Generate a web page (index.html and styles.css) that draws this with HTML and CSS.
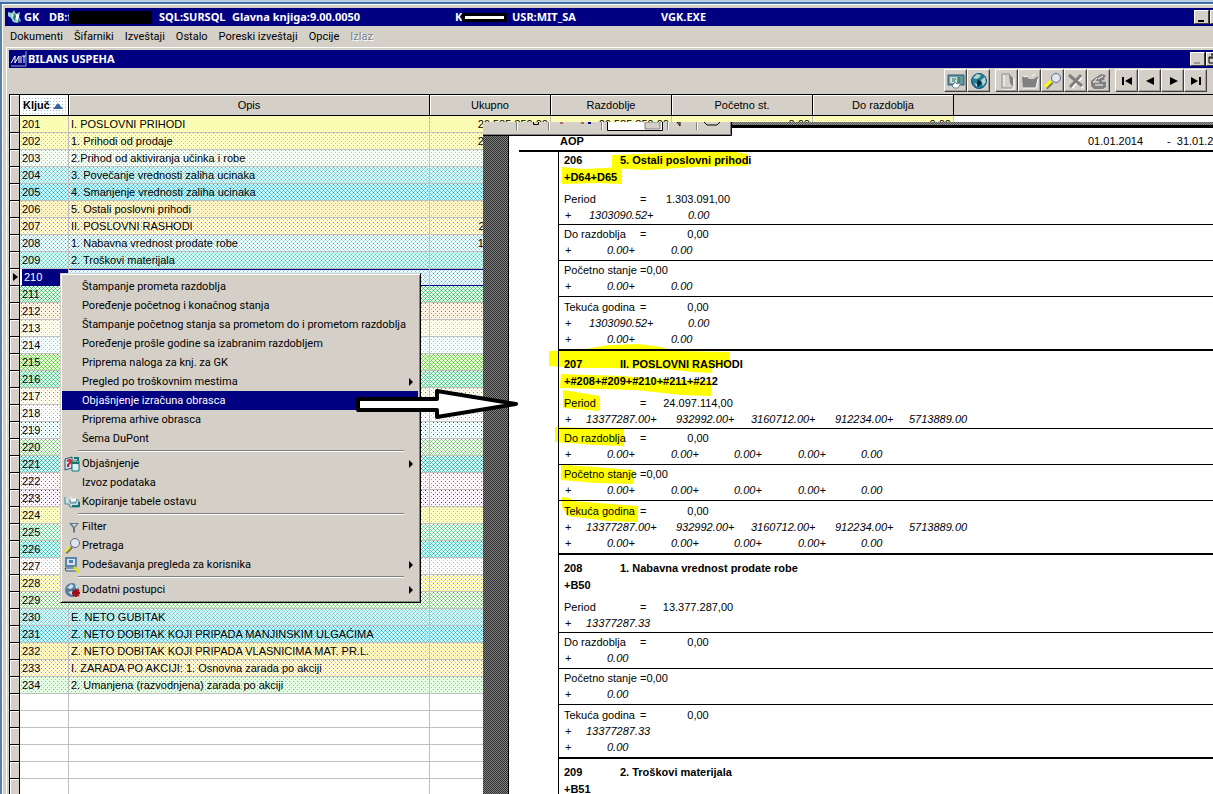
FILE: index.html
```html
<!DOCTYPE html>
<html lang="sr-Latn">
<head>
<meta charset="utf-8">
<title>GK - Bilans uspeha</title>
<link rel="stylesheet" href="styles.css">
</head>
<body>
<main class="desktop">
<div class="window">
<header class="titlebar">
  <svg class="app-icon" width="16" height="16" viewBox="0 0 16 16"><path d="M1 3l4 1 2-3 2 4 4-2-1 5 2 4-4 2-4-1-2-4-3-2z" fill="#9cc"/><path d="M5 4l3 4-2 2zM9 5l3 1-1 6-3-3z" fill="#fff"/><path d="M7 4l2 3-1 5-2-3zM11 9l2 3-2 1z" fill="#277"/></svg>
  <div class="title-fields">
    <span>GK</span><span>DB:f</span><span class="redacted"></span><span>SQL:SURSQL</span><span>Glavna knjiga:9.00.0050</span><span class="masked">K<i></i></span><span>USR:MIT_SA</span><span>VGK.EXE</span>
  </div>
  <div class="caption-buttons outer"><button aria-label="Minimize"><i></i></button><button aria-label="Maximize"></button></div>
</header>
<nav class="menubar">
  <button>Dokumenti</button><button>Šifarniki</button><button>Izveštaji</button><button>Ostalo</button><button>Poreski izveštaji</button><button>Opcije</button><button disabled>Izlaz</button>
</nav>
<section class="child">
<header class="titlebar">
  <svg class="mit-icon" width="18" height="18" viewBox="0 0 18 18"><path d="M2 13l4-7v7l4-7v7M12 6v7M13 6h4M15 6v7" fill="none" stroke="#fff"/><path d="M17 1v15H2" fill="none" stroke="#9ab"/></svg>
  <h1>BILANS USPEHA</h1>
  <div class="caption-buttons inner"><button aria-label="Minimize" disabled><i></i></button><button aria-label="Restore"><svg width="12" height="12" viewBox="0 0 12 12"><path d="M4 1h6v5H8M2 4h6v6H2zM4 2h6M2 5h6" fill="none" stroke="#000"/></svg></button></div>
</header>
<div class="toolbar">
  <div class="group">
    <button aria-label="Monitor"><svg viewBox="0 0 18 18"><path d="M1 3h16v10H1z" fill="#699" stroke="#357"/><path d="M3 5h7v6H3z" fill="#cdd"/><path d="M5 7h4M5 9h3M12 5v6" stroke="#275"/><path d="M5 14l3-4 2 2 4-1-3 5H7z" fill="#fff" stroke="#68a"/></svg></button>
    <button aria-label="Web"><svg viewBox="0 0 18 18"><circle cx="9" cy="9" r="7.500" fill="#267d98" stroke="#134c78"/><path d="M3 6l4-4 4 1-2 3-3 1zM11 8l4-3 1 5-3 4zM4 11l3 1v3z" fill="#add8c8"/><path d="M8 7l4 4-4 4-1-4z" fill="#024"/></svg></button>
  </div>
  <div class="group">
    <button aria-label="Novi" disabled><svg viewBox="0 0 18 18"><path d="M4 2h8l3 3v12H4z" fill="#d4d0c8"/><path d="M5 17h11V6M6 3v11" fill="none" stroke="#fff"/><path d="M4 2h8M4 2v14h10" fill="none" stroke="#909090"/><path d="M11 2l4 4v9l-3-4z" fill="#808080"/></svg></button>
    <button aria-label="Otvori" disabled><svg viewBox="0 0 18 18"><path d="M1 5h5l2 2h5l4-3-2 12H2z" fill="#808080"/><path d="M2 16h13l2-9M3 5l3-1M11 4l3-2" fill="none" stroke="#fff"/></svg></button>
    <button aria-label="Traži"><svg viewBox="0 0 18 18"><path d="M2 16l6-6" stroke="#777" stroke-width="4"/><path d="M1 15l6-6" stroke="#ff0" stroke-width="3"/><circle cx="12" cy="6" r="4.500" fill="#dde6ee" stroke="#668"/></svg></button>
    <button aria-label="Obriši" disabled><svg viewBox="0 0 18 18"><path d="M4 4l12 12M15 5L5 16" stroke="#fff" stroke-width="2"/><path d="M2 3l13 11M14 3L3 15" stroke="#808080" stroke-width="3"/></svg></button>
    <button aria-label="Štampaj" disabled><svg viewBox="0 0 18 18"><path d="M1 9l4-3 6-4 5 1-2 4 2 2v6l-3 2H4l-3-3z" fill="#808080"/><path d="M8 7l5-3M3 10h6M5 13h8M7 6l-3 4M12 9h4" stroke="#fff"/></svg></button>
  </div>
  <div class="group">
    <button aria-label="Prvi"><svg viewBox="0 0 18 18"><path d="M4 5h2v8H4zM14 5v8L7 9z"/></svg></button>
    <button aria-label="Prethodni"><svg viewBox="0 0 18 18"><path d="M13 5v8L5 9z"/></svg></button>
    <button aria-label="Sledeći"><svg viewBox="0 0 18 18"><path d="M6 5v8l8-4z"/></svg></button>
    <button aria-label="Poslednji"><svg viewBox="0 0 18 18"><path d="M4 5v8l7-4zM12 5h2v8h-2z"/></svg></button>
  </div>
</div>
<table class="grid">
<colgroup><col class="c-sel"><col class="c-key"><col class="c-name"><col class="c-amt"><col class="c-amt"><col class="c-wide"><col class="c-wide"><col></colgroup>
<thead><tr><th></th><th class="sorted">Ključ <svg width="10" height="6" viewBox="0 0 10 6"><path d="M0 6l5-6 5 6z" fill="#3a64a0"/></svg></th><th>Opis</th><th>Ukupno</th><th>Razdoblje</th><th>Početno st.</th><th>Do razdoblja</th><th class="rest"></th></tr></thead>
<tbody>
<tr class="lemon"><th></th><td>201</td><td>I. POSLOVNI PRIHODI</td><td>26.585.859,00</td><td>26.585.859,00</td><td>0,00</td><td>0,00</td><td></td></tr>
<tr class="lime"><th></th><td>202</td><td>1. Prihodi od prodaje</td><td>25.282.768,00</td><td></td><td></td><td></td><td></td></tr>
<tr class="mint"><th></th><td>203</td><td>2.Prihod od aktiviranja učinka i robe</td><td></td><td></td><td></td><td></td><td></td></tr>
<tr class="aqua"><th></th><td>204</td><td>3. Povečanje vrednosti zaliha ucinaka</td><td></td><td></td><td></td><td></td><td></td></tr>
<tr class="cyan"><th></th><td>205</td><td>4. Smanjenje vrednosti zaliha ucinaka</td><td></td><td></td><td></td><td></td><td></td></tr>
<tr class="peach"><th></th><td>206</td><td>5. Ostali poslovni prihodi</td><td></td><td></td><td></td><td></td><td></td></tr>
<tr class="sand"><th></th><td>207</td><td>II. POSLOVNI RASHODI</td><td>24.097.114,00</td><td></td><td></td><td></td><td></td></tr>
<tr class="mist"><th></th><td>208</td><td>1. Nabavna vrednost prodate robe</td><td>13.377.287,00</td><td></td><td></td><td></td><td></td></tr>
<tr class="teal"><th></th><td>209</td><td>2. Troškovi materijala</td><td></td><td></td><td></td><td></td><td></td></tr>
<tr class="mist current"><th><svg width="5" height="8" viewBox="0 0 5 8"><path d="M0 0v8l5-4z"/></svg></th><td>210</td><td>3. Troškovi zarada, naknada i ostali lični</td><td></td><td></td><td></td><td></td><td></td></tr>
<tr class="green"><th></th><td>211</td><td></td><td></td><td></td><td></td><td></td><td></td></tr>
<tr class="rose"><th></th><td>212</td><td></td><td></td><td></td><td></td><td></td><td></td></tr>
<tr class="pale"><th></th><td>213</td><td></td><td></td><td></td><td></td><td></td><td></td></tr>
<tr class="ice"><th></th><td>214</td><td></td><td></td><td></td><td></td><td></td><td></td></tr>
<tr class="grass"><th></th><td>215</td><td></td><td></td><td></td><td></td><td></td><td></td></tr>
<tr class="jade"><th></th><td>216</td><td></td><td></td><td></td><td></td><td></td><td></td></tr>
<tr class="cream"><th></th><td>217</td><td></td><td></td><td></td><td></td><td></td><td></td></tr>
<tr class="snow"><th></th><td>218</td><td></td><td></td><td></td><td></td><td></td><td></td></tr>
<tr class="sky"><th></th><td>219</td><td></td><td></td><td></td><td></td><td></td><td></td></tr>
<tr class="leaf"><th></th><td>220</td><td></td><td></td><td></td><td></td><td></td><td></td></tr>
<tr class="sea"><th></th><td>221</td><td></td><td></td><td></td><td></td><td></td><td></td></tr>
<tr class="pink"><th></th><td>222</td><td></td><td></td><td></td><td></td><td></td><td></td></tr>
<tr class="violet"><th></th><td>223</td><td></td><td></td><td></td><td></td><td></td><td></td></tr>
<tr class="lime"><th></th><td>224</td><td></td><td></td><td></td><td></td><td></td><td></td></tr>
<tr class="spring"><th></th><td>225</td><td></td><td></td><td></td><td></td><td></td><td></td></tr>
<tr class="turq"><th></th><td>226</td><td></td><td></td><td></td><td></td><td></td><td></td></tr>
<tr class="snow"><th></th><td>227</td><td></td><td></td><td></td><td></td><td></td><td></td></tr>
<tr class="gold"><th></th><td>228</td><td></td><td></td><td></td><td></td><td></td><td></td></tr>
<tr class="leaf"><th></th><td>229</td><td></td><td></td><td></td><td></td><td></td><td></td></tr>
<tr class="aqua"><th></th><td>230</td><td>E. NETO GUBITAK</td><td></td><td></td><td></td><td></td><td></td></tr>
<tr class="cyan"><th></th><td>231</td><td>Z. NETO DOBITAK KOJI PRIPADA MANJINSKIM ULGAĆIMA</td><td></td><td></td><td></td><td></td><td></td></tr>
<tr class="amber"><th></th><td>232</td><td>Z. NETO DOBITAK KOJI PRIPADA VLASNICIMA MAT. PR.L.</td><td></td><td></td><td></td><td></td><td></td></tr>
<tr class="sand"><th></th><td>233</td><td>I. ZARADA PO AKCIJI: 1. Osnovna zarada po akciji</td><td></td><td></td><td></td><td></td><td></td></tr>
<tr class="meadow"><th></th><td>234</td><td>2. Umanjena (razvodnjena) zarada po akciji</td><td></td><td></td><td></td><td></td><td></td></tr>
<tr><th></th><td></td><td></td><td></td><td></td><td></td><td></td><td></td></tr>
<tr><th></th><td></td><td></td><td></td><td></td><td></td><td></td><td></td></tr>
<tr><th></th><td></td><td></td><td></td><td></td><td></td><td></td><td></td></tr>
<tr><th></th><td></td><td></td><td></td><td></td><td></td><td></td><td></td></tr>
<tr><th></th><td></td><td></td><td></td><td></td><td></td><td></td><td></td></tr>
<tr><th></th><td></td><td></td><td></td><td></td><td></td><td></td><td></td></tr>
</tbody>
</table>
</section>
</div>

<aside class="preview">
  <svg class="preview-tools" width="249" height="14" viewBox="0 0 249 14">
    <path d="M0 0h249v14H0z" fill="#d4d0c8"/><path d="M0 13.500h248.500V0" fill="none" stroke="#000"/><path d="M0 12.500h247.500V0" fill="none" stroke="#808080"/>
    <path d="M33.500 0v8M65.500 0v8M118.500 0v8M184.500 0v8M213.500 0v8" stroke="#808080"/><path d="M34.500 0v8M66.500 0v8M119.500 0v8M185.500 0v8M214.500 0v8" stroke="#fff"/>
    <path d="M50.500 0v2.500h5V0" fill="none" stroke="#000"/><path d="M77 1h3M98 1h3" stroke="#800"/><path d="M105 1h3" stroke="#008" stroke-width="2"/>
    <path d="M124.500 0v8.500h55V0" fill="#fff" stroke="#000"/><path d="M162 0h15v7h-15z" fill="#d4d0c8" stroke="#808080"/>
    <path d="M194 0l3 4V0zM221 0l3 3h10l3-3" fill="none" stroke="#000"/>
  </svg>
  <div class="sheet">
    <div class="gutter"></div>
    <article class="page">
      <svg class="marker" aria-hidden="true"><g transform="translate(-509 -128)" fill="#ff0">
        <path d="M612 155l50-2 66-2 20 3v12l-52 1-50 3-34-2z"/>
        <path d="M562 167l22 2 38-2v17l-25-1-35 1z"/>
        <path d="M549 351l30-1 30-5 30-1 22 3 12 4 56 1v15l-16 0-2 6-18-1-28-3-56-1h-28l-32-2z"/>
        <path d="M561 374l60 2 40 3 50 2v15l-30-1-45-5-36-1-40-1z"/>
        <path d="M563 390l37 6v15l-37-3z"/>
        <path d="M555 427l32 1 37 1v17l-28-1-41-3z"/>
        <path d="M561 465l20 1 53 4v14l-37-1-36-3z"/>
        <path d="M562 497l8 1 2 3 66 5v16l-30-1-40-5-6-9z"/>
      </g></svg>
      <header class="page-head"><b>AOP</b><span>01.01.2014</span><span>- &nbsp;31.01.2014</span></header>
      <div class="entries">
        <section class="entry">
          <h2><span>206</span>5. Ostali poslovni prihodi</h2><h3>+D64+D65</h3>
          <div class="part"><p class="sum"><span>Period</span><span>=</span><span>1.303.091,00</span></p><p class="calc two"><b>+</b><i>1303090.52+</i><i>0.00</i></p></div>
          <div class="part"><p class="sum"><span>Do razdoblja</span><span>=</span><span>0,00</span></p><p class="calc"><b>+</b><i>0.00+</i><i>0.00</i></p></div>
          <div class="part"><p class="sum near"><span>Početno stanje</span><span>=0,00</span></p><p class="calc"><b>+</b><i>0.00+</i><i>0.00</i></p></div>
          <div class="part"><p class="sum"><span>Tekuća godina</span><span>=</span><span>0,00</span></p><p class="calc two"><b>+</b><i>1303090.52+</i><i>0.00</i></p><p class="calc"><b>+</b><i>0.00+</i><i>0.00</i></p></div>
        </section>
        <section class="entry">
          <h2><span>207</span>II. POSLOVNI RASHODI</h2><h3>+#208+#209+#210+#211+#212</h3>
          <div class="part"><p class="sum"><span>Period</span><span>=</span><span>24.097.114,00</span></p><p class="calc many"><b>+</b><i>13377287.00+</i><i>932992.00+</i><i>3160712.00+</i><i>912234.00+</i><i>5713889.00</i></p></div>
          <div class="part"><p class="sum"><span>Do razdoblja</span><span>=</span><span>0,00</span></p><p class="calc"><b>+</b><i>0.00+</i><i>0.00+</i><i>0.00+</i><i>0.00+</i><i>0.00</i></p></div>
          <div class="part"><p class="sum near"><span>Početno stanje</span><span>=0,00</span></p><p class="calc"><b>+</b><i>0.00+</i><i>0.00+</i><i>0.00+</i><i>0.00+</i><i>0.00</i></p></div>
          <div class="part"><p class="sum"><span>Tekuća godina</span><span>=</span><span>0,00</span></p><p class="calc many"><b>+</b><i>13377287.00+</i><i>932992.00+</i><i>3160712.00+</i><i>912234.00+</i><i>5713889.00</i></p><p class="calc"><b>+</b><i>0.00+</i><i>0.00+</i><i>0.00+</i><i>0.00+</i><i>0.00</i></p></div>
        </section>
        <section class="entry">
          <h2><span>208</span>1. Nabavna vrednost prodate robe</h2><h3>+B50</h3>
          <div class="part"><p class="sum"><span>Period</span><span>=</span><span>13.377.287,00</span></p><p class="calc many"><b>+</b><i>13377287.33</i></p></div>
          <div class="part"><p class="sum"><span>Do razdoblja</span><span>=</span><span>0,00</span></p><p class="calc"><b>+</b><i>0.00</i></p></div>
          <div class="part"><p class="sum near"><span>Početno stanje</span><span>=0,00</span></p><p class="calc"><b>+</b><i>0.00</i></p></div>
          <div class="part"><p class="sum"><span>Tekuća godina</span><span>=</span><span>0,00</span></p><p class="calc many"><b>+</b><i>13377287.33</i></p><p class="calc"><b>+</b><i>0.00</i></p></div>
        </section>
        <section class="entry"><h2><span>209</span>2. Troškovi materijala</h2><h3>+B51</h3></section>
      </div>
    </article>
  </div>
</aside>

<div class="context" role="menu">
  <button role="menuitem">Štampanje prometa razdoblja</button>
  <button role="menuitem">Poređenje početnog i konačnog stanja</button>
  <button role="menuitem">Štampanje početnog stanja sa prometom do i prometom razdoblja</button>
  <button role="menuitem">Poređenje prošle godine sa izabranim razdobljem</button>
  <button role="menuitem">Priprema naloga za knj. za GK</button>
  <button role="menuitem" class="sub">Pregled po troškovnim mestima</button>
  <button role="menuitem" class="active">Objašnjenje izračuna obrasca</button>
  <button role="menuitem">Priprema arhive obrasca</button>
  <button role="menuitem">Šema DuPont</button>
  <hr>
  <button role="menuitem" class="sub"><svg viewBox="0 0 16 16"><path d="M1 3l7-2v11l-7 2z" fill="#cde" stroke="#357"/><path d="M8 5h7v10H8z" fill="#dee" stroke="#177"/><path d="M10 2h4v3M8 7h7" fill="none" stroke="#177" stroke-width="2"/><path d="M3 5l3-1 1 2-3 3v2" fill="none" stroke="#c22" stroke-width="2"/></svg>Objašnjenje</button>
  <button role="menuitem">Izvoz podataka</button>
  <button role="menuitem"><svg viewBox="0 0 16 16"><path d="M1 3v7h4l1 3h9V7l-3-2v4H6V5" fill="#cde" stroke="#4a8a90"/><path d="M6 2l2 3 4-1v3H7z" fill="#fff"/><path d="M8 12h7V8" fill="none" stroke="#177" stroke-width="2"/></svg>Kopiranje tabele ostavu</button>
  <hr>
  <button role="menuitem"><svg viewBox="0 0 16 16"><path d="M5 4h10l-4 5v5l-2-1V9z" fill="#678"/><path d="M8 5h5l-3 3z" fill="#cdd"/></svg>Filter</button>
  <button role="menuitem"><svg viewBox="0 0 16 16"><path d="M2 15l6-6" stroke="#776" stroke-width="3"/><path d="M1 14l5-5" stroke="#ee2" stroke-width="2"/><circle cx="11" cy="5" r="4.500" fill="#dde6ee" stroke="#668"/></svg>Pretraga</button>
  <button role="menuitem" class="sub"><svg viewBox="0 0 16 16"><path d="M2 1h10v8H2z" fill="#dde" stroke="#58a" stroke-width="2"/><path d="M5 3h4v3H5z" fill="#48a"/><path d="M1 11h10l2 3H2z" fill="#cdd" stroke="#357"/><path d="M10 10l5 5" stroke="#dd2" stroke-width="3"/></svg>Podešavanja pregleda za korisnika</button>
  <hr>
  <button role="menuitem" class="sub"><svg viewBox="0 0 16 16"><circle cx="8" cy="8" r="7" fill="#567c99"/><path d="M3 6l4-4 3 2-3 3zM4 10l4-1v4zM11 1l4 4-3 2z" fill="#cde"/><path d="M12 7v8M8 11h8M9 8l6 6M15 8l-6 6" stroke="#a01018" stroke-width="2"/></svg>Dodatni postupci</button>
</div>
<svg class="pointer" width="168" height="34" viewBox="0 0 168 34"><path d="M5 12h79V4l79 13-79 13v-7H5z" fill="#fff" stroke="#000" stroke-width="4" stroke-linejoin="round"/></svg>
</main>
</body>
</html>
```
FILE: styles.css
```css
:root {
  --face: #d4d0c8;
  --navy: #000080;
  --ui: Roboto, "Liberation Sans", sans-serif;
  --doc: "Liberation Sans", Arial, sans-serif;
}
* { box-sizing: border-box; }
body { margin: 0; font: 11px/16px var(--doc); color: #000; }
button { font: inherit; color: inherit; margin: 0; padding: 0; border: 0; background: none; }
h1, h2, h3, p { margin: 0; font-size: 11px; }
svg { display: block; flex: none; }

.desktop {
  position: relative;
  height: 100vh;
  overflow: hidden;
  padding: 4px 0 0 2px;
  background: linear-gradient(#b9cfe6 2px, #3f6ea5 2px 4px, #5b7fa6 4px);
}
.window {
  height: 100%;
  border-top: 1px solid #fff;
  border-left: 1px solid #fff;
  padding: 3px 0 0 2px;
  background: var(--face);
  overflow: hidden;
}
.titlebar {
  display: flex;
  align-items: center;
  height: 18px;
  background: var(--navy);
  color: #fff;
  font: bold 11px/18px "Noto Sans", sans-serif;
}
.app-icon { margin: 0 1px 0 2px; }
.title-fields {
  display: grid;
  grid-template-columns: 25px 20px 90px 73px 223px 57px 149px auto;
  white-space: pre;
}
.redacted { height: 13px; margin: 3px 7px 0 0; background: #000; z-index: 1; }
.masked { display: flex; align-items: center; }
.masked i { width: 45px; height: 9px; border: 3px solid #000; background: #fff; }
.caption-buttons { display: flex; gap: 1px; margin-left: auto; overflow: hidden; }
.caption-buttons.outer { width: 19px; }
.caption-buttons.inner { width: 23px; }
.caption-buttons button {
  flex: none;
  width: 15px;
  height: 14px;
  background: var(--face);
  border: 1px solid;
  border-color: #fff #404040 #404040 #fff;
}
.caption-buttons i { display: block; width: 6px; height: 2px; margin: 7px 0 0 3px; background: #000; }
.caption-buttons :disabled i { background: #999; }

.menubar {
  display: flex;
  gap: 11px;
  height: 21px;
  padding-left: 5px;
  font: 11px/20px var(--ui);
}
.menubar :disabled { color: #808080; text-shadow: 1px 1px #fff; }

.child {
  margin-left: 1px;
  border-top: 1px solid #fff;
  border-left: 1px solid #fff;
  padding: 2px 0 0 2px;
}
.child h1 { font-size: 11px; margin-left: 1px; }
.toolbar { display: flex; justify-content: flex-end; gap: 5px; height: 26px; padding: 1px 6px 0 0; }
.group { display: flex; }
.group button {
  width: 23px;
  height: 23px;
  padding: 2px;
  border: 1px solid;
  border-color: #fff #404040 #404040 #fff;
  box-shadow: inset -1px -1px #a0a0a0;
}
.group svg { width: 18px; height: 18px; }

.grid {
  width: 100%;
  table-layout: fixed;
  border-spacing: 0;
  background: #fff;
}
.c-sel { width: 11px; }
.c-key { width: 49px; }
.c-name { width: 361px; }
.c-amt { width: 121px; }
.c-wide { width: 141px; }
.grid thead th {
  height: 22px;
  padding: 0;
  font-weight: normal;
  background: var(--face);
  border: solid #000;
  border-width: 1px 1px 1px 0;
  box-shadow: inset 1px 1px #fff;
}
.grid thead .sorted {
  font-weight: bold;
  text-align: left;
  padding-left: 3px;
  background: conic-gradient(at 1px 1px, transparent 75%, #9cc4dc 0) 0 0 / 3px 3px #fff;
}
.sorted svg { display: inline-block; }
.grid thead .rest { border-right: 0; box-shadow: none; }
.grid tr > :first-child { border-left: 1px solid #000; }
.grid tbody th {
  padding: 0;
  background: var(--face);
  border-right: 1px solid #000;
  border-bottom: 1px solid #000;
  box-shadow: inset 1px 1px #fff;
}
.grid tbody th svg { margin-left: 3px; }
.grid td {
  height: 17px;
  padding: 0 2px;
  line-height: 16px;
  white-space: nowrap;
  overflow: hidden;
  border-right: 1px solid #c0c0c0;
  border-bottom: 1px solid #c0c0c0;
}
.grid td:nth-child(n+4) { text-align: right; }
.grid td:last-child { border-right: 0; background: #fff; }
.grid tbody tr[class] {
  background:
    conic-gradient(at 1px 1px, transparent 75%, var(--a) 0) 0 0 / 4px 4px,
    conic-gradient(at 1px 1px, transparent 75%, var(--b) 0) 2px 2px / 4px 4px,
    conic-gradient(at 1px 1px, transparent 75%, var(--c, transparent) 0) 1px 1px / 2px 2px,
    var(--base);
}
.lemon { --a: #ecea98; --b: #ecea98; --base: #ffffb8; }
.lime { --a: #70d870; --b: #f0b080; --base: #ffffc4; }
.mint { --a: #58d480; --b: #88e098; --base: #f6fff4; }
.aqua { --a: #50b0b8; --b: #68c8d0; --c: #98dce0; --base: #dcfafa; }
.cyan { --a: #3898b8; --b: #40b8cc; --c: #78d4e4; --base: #c8f8fa; }
.peach { --a: #e08870; --b: #f0b860; --base: #fff4c4; }
.sand { --a: #a88068; --b: #d0b880; --c: #fff0b0; --base: #fffff4; }
.mist { --a: #7090c0; --b: #68c8c0; --c: #c0e4ec; --base: #f4ffff; }
.teal { --a: #40b8c0; --b: #50c8a8; --c: #98e4d8; --base: #d8faf8; }
.green { --a: #309858; --b: #48b868; --c: #78d094; --base: #e8fff0; }
.rose { --a: #d05060; --b: #f09850; --base: #fff4e4; }
.pale { --a: #60d888; --b: #f4d070; --base: #ffffee; }
.ice { --a: #40d0e8; --b: #70e0e0; --base: #f4ffff; }
.grass { --a: #48b838; --b: #58c858; --c: #90dc78; --base: #ecfcd8; }
.jade { --a: #30a878; --b: #38b8a0; --c: #78d4a4; --base: #dcfaec; }
.cream { --a: #e06848; --b: #f0c060; --base: #fffdee; }
.snow { --a: #c89098; --b: #a8ccc8; --base: #fff; }
.sky { --a: #3040a0; --b: #50d0ec; --base: #f0ffff; }
.leaf { --a: #509850; --b: #60c060; --c: #a4d8a0; --base: #fafffa; }
.sea { --a: #208880; --b: #30a0a0; --c: #68c4bc; --base: #d8faf8; }
.pink { --a: #d04090; --b: #f08090; --base: #fff6fa; }
.violet { --a: #3828a0; --b: #c060d8; --base: #fdf6ff; }
.spring { --a: #38b068; --b: #50cc88; --c: #90e0b0; --base: #f4fffa; }
.turq { --a: #28a8a0; --b: #30b8c0; --c: #70d8d0; --base: #d4faf8; }
.gold { --a: #b89828; --b: #e0cc38; --c: #f8f098; --base: #fffff0; }
.amber { --a: #c89058; --b: #e4b860; --c: #fff0a8; --base: #fffad0; }
.meadow { --a: #50c870; --b: #78d890; --base: #e4ffe4; }
.current td { border-bottom-color: var(--navy); box-shadow: inset 0 1px var(--navy); }
.current td:nth-child(2) { background: var(--navy); color: #fff; border-left: 2px solid #fff; }

.preview { position: absolute; top: 122px; left: 483px; right: 0; bottom: 0; overflow: hidden; background: #000; }
.preview::before {
  content: "";
  display: block;
  height: 3px;
  background: conic-gradient(#555 25%, #999 0 50%, #555 0 75%, #999 0) 0 0 / 2px 2px;
}
.preview-tools { position: absolute; top: 0; left: 0; z-index: 2; }
.sheet { display: flex; height: 100%; padding-top: 3px; }
.gutter {
  flex: none;
  width: 26px;
  border-right: 1px solid #000;
  background: conic-gradient(#303030 25%, #808080 0 50%, #303030 0 75%, #808080 0) 0 0 / 2px 2px;
}
.page { position: relative; z-index: 0; flex: 1; padding-left: 10px; background: #fff; }
.marker { position: absolute; z-index: -1; top: 0; left: 0; width: 100%; height: 100%; }
.page-head {
  display: grid;
  grid-template-columns: 528px 79px auto;
  height: 24px;
  padding: 5px 0 0 41px;
  white-space: nowrap;
  border-bottom: 2px solid #000;
}
.entries { margin-left: 39px; border-left: 1px solid #000; }
.entry { padding-top: 5px; border-top: 2px solid #000; line-height: 16px; }
.entry:first-child { padding-top: 0; border-top: 0; }
.entry h2, .entry h3 { padding-left: 5px; line-height: 17px; }
.entry h2 span { display: inline-block; width: 56px; }
.part { padding: 1px 0 2px; border-bottom: 1px solid #000; }
h3 + .part { padding: 5px 0 1px; }
.part:last-child { padding-top: 2px; border-bottom: 0; }
.sum { display: grid; grid-template-columns: 76px 14px 88px; padding-left: 5px; white-space: nowrap; }
.sum span:nth-child(3) { text-align: center; }
.calc { display: grid; grid-template-columns: 42px 64px 63px 64px 63px auto; padding-left: 6px; }
.calc.two { grid-template-columns: 24px 99px auto; }
.calc.many { grid-template-columns: 21px 90px 75px 84px 74px auto; }
.calc b { font-weight: normal; }

.context {
  position: absolute;
  top: 273px;
  left: 60px;
  width: 361px;
  padding: 3px 2px 3px 1px;
  background: var(--face);
  border: 1px solid var(--face);
  border-right-color: #000;
  border-bottom-color: #000;
  box-shadow: inset 1px 1px #fff, inset -1px -1px #808080;
  font: 11px/18px var(--ui);
}
.context button {
  display: flex;
  align-items: center;
  width: 100%;
  height: 19px;
  padding-left: 20px;
  white-space: nowrap;
}
.context svg { width: 16px; height: 16px; margin: 0 2px 0 -18px; }
.context .active { background: var(--navy); color: #fff; }
.context .sub::after {
  content: "";
  margin: 0 5px 0 auto;
  border: 4px solid transparent;
  border-left-color: #000;
  border-right-width: 0;
}
.context hr { height: 2px; margin: 2px 14px 2px 16px; border: 0; border-top: 1px solid #808080; border-bottom: 1px solid #fff; }
.pointer { position: absolute; top: 387px; left: 353px; }
```
